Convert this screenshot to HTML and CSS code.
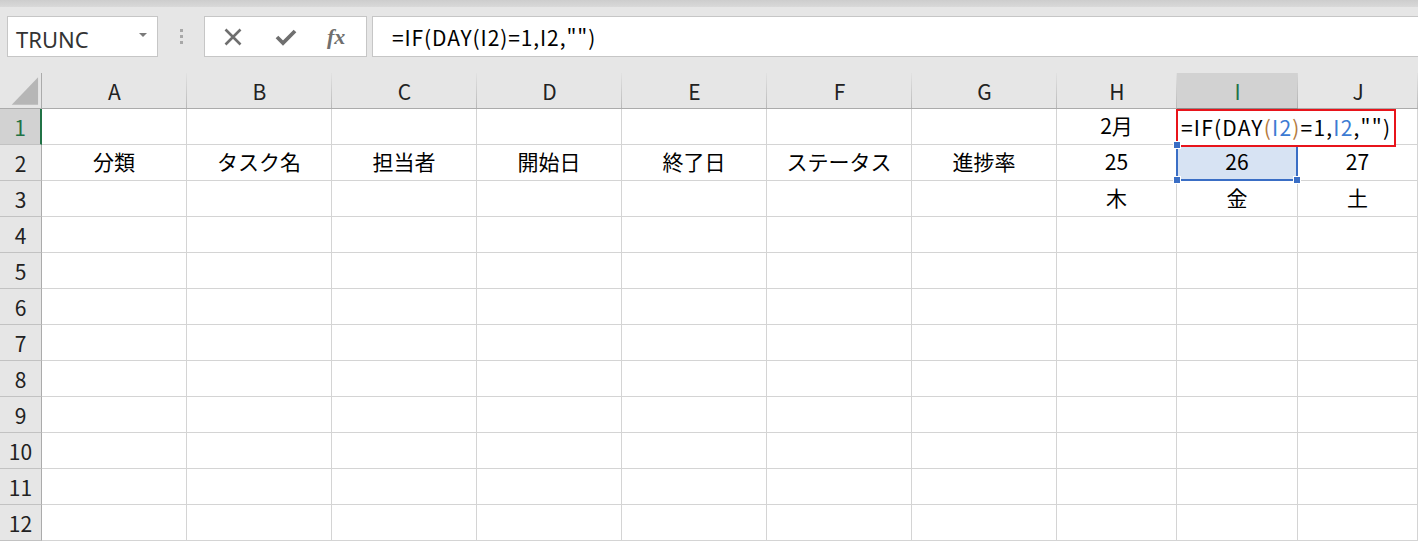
FILE: index.html
```html
<!DOCTYPE html>
<html lang="ja">
<head>
<meta charset="utf-8">
<title>Excel</title>
<link rel="stylesheet" href="styles.css">
</head>
<body>
<div class="topstrip"></div>
<div class="toolbar">
  <div class="namebox"><span class="nb-text">TRUNC</span><span class="caret"></span></div>
  <div class="grip"><i></i><i></i><i></i></div>
  <div class="buttons">
    <svg class="ic" width="20" height="20" viewBox="0 0 20 20"><path d="M2.5 2.5 L17.5 17.5 M17.5 2.5 L2.5 17.5" stroke="#6f6f6f" stroke-width="2.6" fill="none"/></svg>
    <svg class="ic" width="22" height="20" viewBox="0 0 22 20"><path d="M2 10 L8 16 L20 4" stroke="#6f6f6f" stroke-width="3.8" fill="none" stroke-linejoin="miter"/></svg>
    <span class="fx">fx</span>
  </div>
  <div class="formula">=IF(DAY(I2)=1,I2,"")</div>
</div>
<div class="sheet">
  <div class="corner"><svg width="42" height="36" viewBox="0 0 42 36"><polygon points="12,32 39,32 39,4" fill="#b6b6b6"/></svg></div>
  <div class="ch">A</div><div class="ch">B</div><div class="ch">C</div><div class="ch">D</div><div class="ch">E</div><div class="ch">F</div><div class="ch">G</div><div class="ch">H</div><div class="ch active">I</div><div class="ch">J</div>

  <div class="rh active">1</div>
  <div class="c"></div><div class="c"></div><div class="c"></div><div class="c"></div><div class="c"></div><div class="c"></div><div class="c"></div><div class="c">2月</div>
  <div class="c edit-cell"><div class="edit">=IF(DAY<span class="p">(</span><span class="ref">I2</span><span class="p">)</span>=1,<span class="ref">I2</span>,"")</div></div>
  <div class="c"></div>

  <div class="rh">2</div>
  <div class="c">分類</div><div class="c">タスク名</div><div class="c">担当者</div><div class="c">開始日</div><div class="c">終了日</div><div class="c">ステータス</div><div class="c">進捗率</div><div class="c">25</div>
  <div class="c sel">26<span class="h h-tl"></span><span class="h h-bl"></span><span class="h h-br"></span></div>
  <div class="c">27</div>

  <div class="rh">3</div>
  <div class="c"></div><div class="c"></div><div class="c"></div><div class="c"></div><div class="c"></div><div class="c"></div><div class="c"></div><div class="c">木</div><div class="c">金</div><div class="c">土</div>

  <div class="rh">4</div>
  <div class="c"></div><div class="c"></div><div class="c"></div><div class="c"></div><div class="c"></div><div class="c"></div><div class="c"></div><div class="c"></div><div class="c"></div><div class="c"></div>
  <div class="rh">5</div>
  <div class="c"></div><div class="c"></div><div class="c"></div><div class="c"></div><div class="c"></div><div class="c"></div><div class="c"></div><div class="c"></div><div class="c"></div><div class="c"></div>
  <div class="rh">6</div>
  <div class="c"></div><div class="c"></div><div class="c"></div><div class="c"></div><div class="c"></div><div class="c"></div><div class="c"></div><div class="c"></div><div class="c"></div><div class="c"></div>
  <div class="rh">7</div>
  <div class="c"></div><div class="c"></div><div class="c"></div><div class="c"></div><div class="c"></div><div class="c"></div><div class="c"></div><div class="c"></div><div class="c"></div><div class="c"></div>
  <div class="rh">8</div>
  <div class="c"></div><div class="c"></div><div class="c"></div><div class="c"></div><div class="c"></div><div class="c"></div><div class="c"></div><div class="c"></div><div class="c"></div><div class="c"></div>
  <div class="rh">9</div>
  <div class="c"></div><div class="c"></div><div class="c"></div><div class="c"></div><div class="c"></div><div class="c"></div><div class="c"></div><div class="c"></div><div class="c"></div><div class="c"></div>
  <div class="rh">10</div>
  <div class="c"></div><div class="c"></div><div class="c"></div><div class="c"></div><div class="c"></div><div class="c"></div><div class="c"></div><div class="c"></div><div class="c"></div><div class="c"></div>
  <div class="rh">11</div>
  <div class="c"></div><div class="c"></div><div class="c"></div><div class="c"></div><div class="c"></div><div class="c"></div><div class="c"></div><div class="c"></div><div class="c"></div><div class="c"></div>
  <div class="rh">12</div>
  <div class="c"></div><div class="c"></div><div class="c"></div><div class="c"></div><div class="c"></div><div class="c"></div><div class="c"></div><div class="c"></div><div class="c"></div><div class="c"></div>
</div>
</body>
</html>
```
FILE: styles.css
```css
html, body {
  margin: 0;
  padding: 0;
}
body {
  width: 1418px;
  height: 541px;
  overflow: hidden;
  background: #e6e6e6;
  font-family: "Noto Sans CJK JP", "Noto Sans", sans-serif;
  color: #000;
}
.topstrip {
  height: 7px;
  background: linear-gradient(#cdcdcd, #d9d9d9);
}
.toolbar {
  display: flex;
  height: 41px;
  margin-top: 9px;
  padding-left: 7px;
}
.namebox {
  width: 151px;
  box-sizing: border-box;
  border: 1px solid #c6c6c6;
  background: #fff;
  display: flex;
  align-items: center;
  justify-content: space-between;
  padding: 0 10px 0 8px;
}
.nb-text {
  font-family: "Noto Sans", sans-serif;
  font-size: 22px;
  color: #333;
  line-height: 1;
  margin-top: 4px;
}
.caret {
  width: 0;
  height: 0;
  border-left: 4px solid transparent;
  border-right: 4px solid transparent;
  border-top: 4px solid #7a7a7a;
  margin-bottom: 4px;
}
.grip {
  width: 46px;
  display: flex;
  flex-direction: column;
  align-items: center;
  justify-content: center;
  gap: 3px;
}
.grip i {
  width: 3px;
  height: 3px;
  background: #a8a8a8;
}
.buttons {
  width: 163px;
  box-sizing: border-box;
  border: 1px solid #c6c6c6;
  background: #fff;
  display: flex;
  align-items: center;
  padding-left: 18px;
  gap: 32px;
}
.ic {
  display: block;
}
.fx {
  font-family: "Liberation Serif", serif;
  font-style: italic;
  font-weight: bold;
  font-size: 22px;
  color: #6f6f6f;
  line-height: 1;
  margin-left: -2px;
}
.formula {
  flex: 1;
  margin-left: 5px;
  box-sizing: border-box;
  border: 1px solid #c6c6c6;
  border-right: none;
  background: #fff;
  padding-left: 19px;
  display: flex;
  align-items: center;
  font-size: 21px;
  letter-spacing: 0.9px;
  color: #000;
  white-space: nowrap;
}
.sheet {
  margin-top: 16px;
  display: grid;
  grid-template-columns: 42px repeat(7, 145px) 120px 121px 120px;
  grid-auto-rows: 36px;
}
.sheet > div {
  box-sizing: border-box;
  display: flex;
  align-items: center;
  justify-content: center;
  font-size: 21px;
  line-height: 1;
  white-space: nowrap;
}
.corner {
  background: #e6e6e6;
  border-right: 1px solid #ababab;
  border-bottom: 1px solid #ababab;
}
.corner svg {
  display: block;
}
.ch {
  background: linear-gradient(#e2e2e2, #b9b9b9) right top / 1px 100% no-repeat, #e6e6e6;
  border-bottom: 1px solid #ababab;
  color: #222;
  padding-top: 2px;
}
.ch.active {
  background: linear-gradient(#d6d6d6, #b0b0b0) right top / 1px 100% no-repeat, #d2d2d2;
  color: #217346;
  border-bottom: 1px solid #8d8d8d;
}
.rh {
  background: #e6e6e6;
  border-right: 1px solid #ababab;
  border-bottom: 1px solid #c2c2c2;
  color: #222;
  padding-top: 2px;
}
.rh.active {
  background: #d2d2d2;
  color: #217346;
  border-right: 2px solid #217346;
}
.c {
  background: #fff;
  border-right: 1px solid #d4d4d4;
  border-bottom: 1px solid #d4d4d4;
  padding-bottom: 3px;
}
.edit-cell {
  position: relative;
}
.edit {
  position: absolute;
  left: -1px;
  top: 0;
  width: 220px;
  height: 38px;
  box-sizing: border-box;
  border: 2px solid #e8141b;
  background: #fff;
  z-index: 3;
  display: flex;
  align-items: center;
  padding-left: 3px;
  padding-bottom: 2px;
  font-size: 21px;
  letter-spacing: 1.2px;
  color: #000;
}
.edit .ref {
  color: #3c7bd3;
}
.edit .p {
  color: #b57b3f;
}
.sel {
  position: relative;
  background: #d7e3f3 !important;
}
.sel::after {
  content: "";
  position: absolute;
  left: -1px;
  top: -1px;
  right: -1px;
  bottom: -1px;
  border: 2px solid #3a6ec5;
  z-index: 2;
}
.h {
  position: absolute;
  width: 6px;
  height: 6px;
  background: #3a6ec5;
  border: 1px solid #fff;
  z-index: 4;
}
.h-tl { left: -4px; top: -4px; }
.h-bl { left: -4px; bottom: -4px; }
.h-br { right: -4px; bottom: -4px; }
```
